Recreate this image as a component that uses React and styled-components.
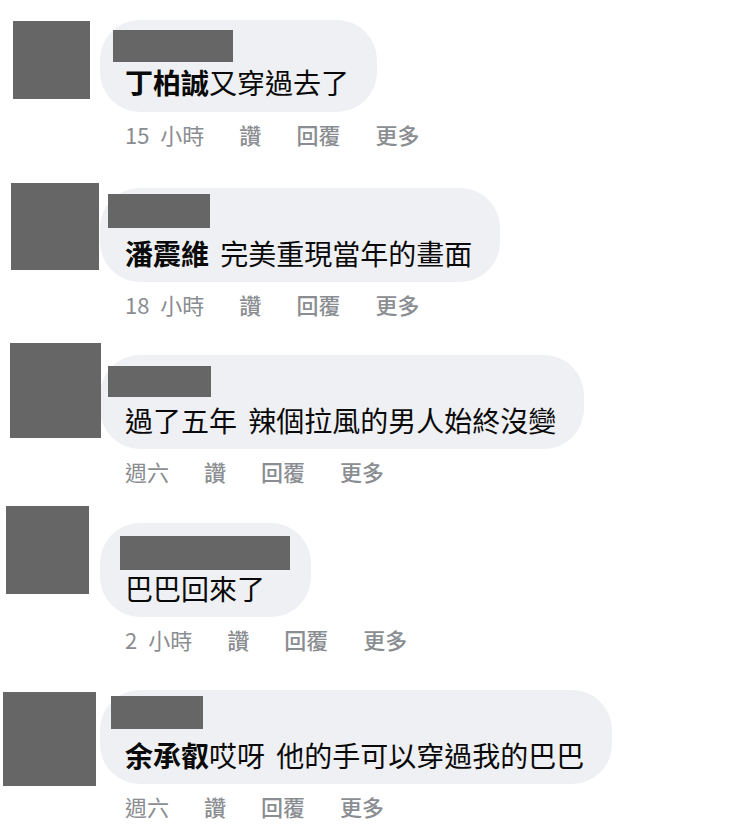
import React from "react";
import styled, { createGlobalStyle } from "styled-components";

const comments = [
  {
    id: 1,
    author: "丁柏誠",
    text: "又穿過去了",
    time: "15 小時",
    bubble: { h: 92, slot: 37 },
    avatar: { x: 13, y: 1, w: 77, h: 78 },
    name: { x: -12, y: 2, w: 120, h: 32 },
  },
  {
    id: 2,
    author: "潘震維",
    text: " 完美重現當年的畫面",
    time: "18 小時",
    bubble: { h: 94, slot: 40 },
    avatar: { x: 11, y: -5, w: 88, h: 87 },
    name: { x: -17, y: -2, w: 102, h: 34 },
  },
  {
    id: 3,
    author: "",
    text: "過了五年 辣個拉風的男人始終沒變",
    time: "週六",
    bubble: { h: 94, slot: 40 },
    avatar: { x: 10, y: -12, w: 91, h: 95 },
    name: { x: -17, y: 3, w: 103, h: 31 },
  },
  {
    id: 4,
    author: "",
    text: "巴巴回來了",
    time: "2 小時",
    bubble: { h: 94, slot: 40 },
    avatar: { x: 6, y: -17, w: 83, h: 88 },
    name: { x: -5, y: 5, w: 170, h: 34, trim: 7 },
  },
  {
    id: 5,
    author: "余承叡",
    text: "哎呀 他的手可以穿過我的巴巴",
    time: "週六",
    bubble: { h: 94, slot: 40 },
    avatar: { x: 3, y: 2, w: 93, h: 94 },
    name: { x: -14, y: -2, w: 92, h: 33 },
  },
];

const App = () => {
  return (
    <>
      <GlobalStyle />
      <List>
        {comments.map(c => (
          <Comment key={c.id}>
            <AvatarSlot>
              <Avatar
                $x={c.avatar.x}
                $y={c.avatar.y}
                $w={c.avatar.w}
                $h={c.avatar.h}
              />
            </AvatarSlot>
            <Body>
              <Bubble $h={c.bubble.h}>
                <NameSlot $h={c.bubble.slot} $trim={c.name.trim || 0}>
                  <Redacted
                    $x={c.name.x}
                    $y={c.name.y}
                    $w={c.name.w}
                    $h={c.name.h}
                  />
                </NameSlot>
                <Text>
                  {c.author && <Author>{c.author}</Author>}
                  {c.text}
                </Text>
              </Bubble>
              <Meta>
                <Time>{c.time}</Time>
                <Action>讚</Action>
                <Action>回覆</Action>
                <Action>更多</Action>
              </Meta>
            </Body>
          </Comment>
        ))}
      </List>
    </>
  );
};

export default App;

const GlobalStyle = createGlobalStyle`
  html, body {
    margin: 0;
    padding: 0;
    background: #ffffff;
  }

  body {
    font-family: "Noto Sans CJK TC", "Noto Sans", sans-serif;
    color: #050505;
  }
`;

const List = styled.div`
  display: flex;
  flex-direction: column;
  padding-top: 20px;
  width: 750px;
  height: 837px;
  box-sizing: border-box;
  overflow: hidden;
`;

const Comment = styled.div`
  display: flex;
  align-items: flex-start;
  height: 167.5px;
  flex-shrink: 0;
`;

const AvatarSlot = styled.div`
  flex: 0 0 100px;
  width: 100px;
  height: 94px;
  position: relative;
`;

const Avatar = styled.div`
  position: absolute;
  left: ${p => p.$x}px;
  top: ${p => p.$y}px;
  width: ${p => p.$w}px;
  height: ${p => p.$h}px;
  background: #666666;
`;

const Body = styled.div`
  display: flex;
  flex-direction: column;
  align-items: flex-start;
`;

const Bubble = styled.div`
  display: flex;
  flex-direction: column;
  align-items: flex-start;
  box-sizing: border-box;
  height: ${p => p.$h}px;
  padding: 8px 28px 0 25px;
  border-radius: 40px;
  background: #eff0f3;
`;

const NameSlot = styled.div`
  height: ${p => p.$h}px;
  margin-right: -${p => p.$trim}px;
`;

const Redacted = styled.div`
  width: ${p => p.$w}px;
  height: ${p => p.$h}px;
  margin-left: ${p => p.$x}px;
  margin-top: ${p => p.$y}px;
  background: #666666;
`;

const Text = styled.div`
  font-size: 28px;
  line-height: 34px;
  word-spacing: 5px;
  white-space: pre;
  color: #0a0a0a;
`;

const Author = styled.span`
  font-weight: 700;
`;

const Meta = styled.div`
  display: flex;
  gap: 35px;
  margin-top: 8px;
  padding-left: 25px;
  font-size: 22px;
  line-height: 28px;
  color: #8a8d91;
`;

const Time = styled.span`
  font-weight: 400;
  word-spacing: 6px;
`;

const Action = styled.span`
  font-weight: 500;
`;
